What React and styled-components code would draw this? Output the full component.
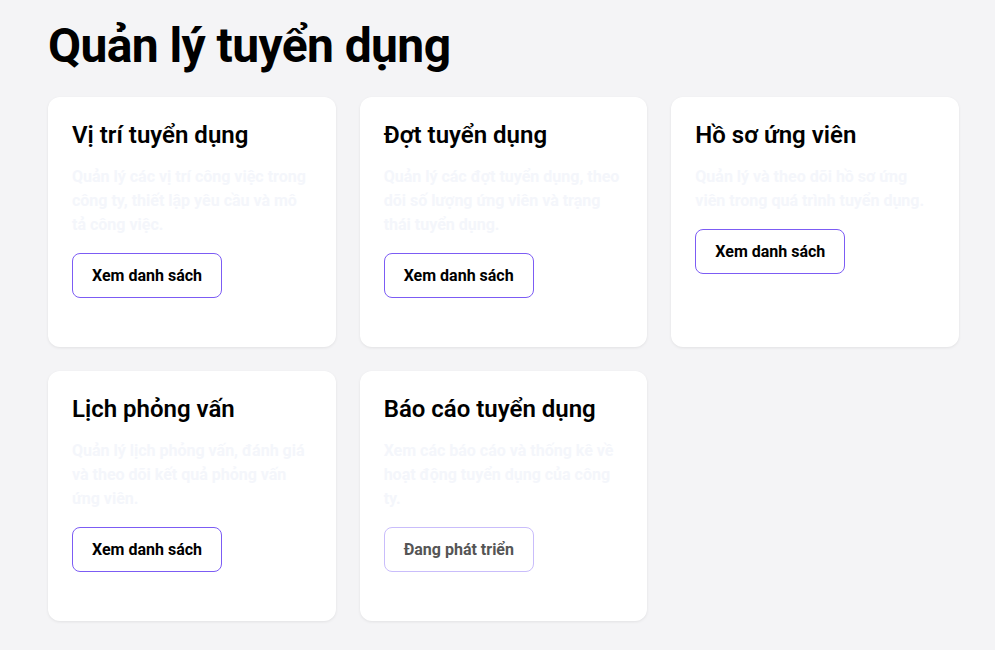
import React from 'react';
import styled, { createGlobalStyle } from 'styled-components';

const GlobalStyle = createGlobalStyle`
  * { box-sizing: border-box; }
  body {
    margin: 0;
    background: #f4f4f6;
    font-family: Roboto, "Noto Sans", sans-serif;
    color: #000;
  }
`;

const Page = styled.div`
  padding: 16px 36px 30px 48px;
`;

const Heading = styled.h1`
  margin: 0 0 21px;
  font-size: 48px;
  line-height: 60px;
  font-weight: 700;
  letter-spacing: -0.6px;
`;

const Grid = styled.div`
  display: grid;
  grid-template-columns: repeat(3, 1fr);
  gap: 24px;
`;

const Card = styled.div`
  background: #fff;
  border-radius: 12px;
  min-height: 250px;
  padding: 24px;
  box-shadow: 0 1px 3px rgba(0, 0, 0, 0.08);
`;

const Title = styled.h3`
  margin: 0 0 16px;
  font-size: 24px;
  line-height: 28px;
  font-weight: 600;
`;

const Desc = styled.p`
  margin: 0 0 16px;
  font-size: 16px;
  line-height: 24px;
  font-weight: 700;
  color: #f4f6fb;
`;

const Button = styled.button`
  font-family: inherit;
  font-size: 16px;
  font-weight: 700;
  color: ${p => (p.disabled ? '#555' : '#000')};
  background: #fff;
  border: 1px solid ${p => (p.disabled ? '#c9bdfb' : '#7c5cf4')};
  border-radius: 8px;
  padding: 0 19px;
  height: 45px;
  cursor: ${p => (p.disabled ? 'default' : 'pointer')};
`;

const modules = [
  { title: 'Vị trí tuyển dụng', desc: 'Quản lý các vị trí công việc trong công ty, thiết lập yêu cầu và mô tả công việc.' },
  { title: 'Đợt tuyển dụng', desc: 'Quản lý các đợt tuyển dụng, theo dõi số lượng ứng viên và trạng thái tuyển dụng.' },
  { title: 'Hồ sơ ứng viên', desc: 'Quản lý và theo dõi hồ sơ ứng viên trong quá trình tuyển dụng.' },
  { title: 'Lịch phỏng vấn', desc: 'Quản lý lịch phỏng vấn, đánh giá và theo dõi kết quả phỏng vấn ứng viên.' },
  { title: 'Báo cáo tuyển dụng', desc: 'Xem các báo cáo và thống kê về hoạt động tuyển dụng của công ty.', wip: true },
];

export default function App() {
  return (
    <>
      <GlobalStyle />
      <Page>
        <Heading>Quản lý tuyển dụng</Heading>
        <Grid>
          {modules.map(m => (
            <Card key={m.title}>
              <Title>{m.title}</Title>
              <Desc>{m.desc}</Desc>
              <Button disabled={m.wip}>{m.wip ? 'Đang phát triển' : 'Xem danh sách'}</Button>
            </Card>
          ))}
        </Grid>
      </Page>
    </>
  );
}
